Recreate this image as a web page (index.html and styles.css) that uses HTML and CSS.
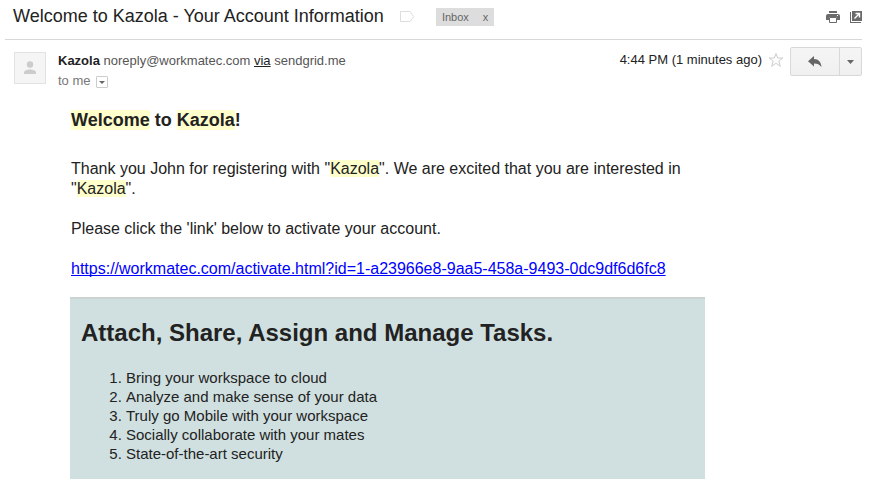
FILE: index.html
```
<!DOCTYPE html>
<html lang="en">
<head>
  <meta charset="UTF-8">
  <title>Welcome to Kazola - Your Account Information</title>
  <link rel="stylesheet" href="styles.css">
</head>
<body>
  <div id="mail">

    <!-- Subject bar -->
    <header class="subjectBar">
      <h1>Welcome to Kazola - Your Account Information</h1>
      <svg class="tagIcon" width="15" height="12" viewBox="0 0 15 12">
        <path d="M.5 .5H10L13.5 5.5V6L10 10.5H.5Z" fill="none" stroke="#ddd"/>
      </svg>
      <div class="label">
        <span>Inbox</span>
        <button type="button" aria-label="Remove label">x</button>
      </div>
      <div class="tools">
        <button type="button" aria-label="Print all">
          <svg width="14" height="12" viewBox="0 0 14 12">
            <path d="M3 0H11V2H3Z M2 3H12Q14 3 14 5V9H11V6H3V9H0V5Q0 3 2 3Z" fill="#6b6b6b"/>
            <path d="M3.5 6.5H10.5V11.5H3.5Z" fill="#fff" stroke="#6b6b6b"/>
            <path d="M11 4H12V5H11Z" fill="#fff"/>
          </svg>
        </button>
        <button type="button" aria-label="Open in new window">
          <svg width="12" height="12" viewBox="0 0 12 12">
            <path d="M2 0H12V10H2Z M0 1H1V11H11V12H0Z" fill="#6b6b6b"/>
            <path d="M4.5 7.5L9 3M5.5 2.5H9.5V6.5" fill="none" stroke="#fff" stroke-width="1.4"/>
          </svg>
        </button>
      </div>
    </header>

    <!-- Sender row -->
    <div class="sender">
      <div class="avatar">
        <svg width="14" height="14" viewBox="0 0 14 14" fill="#ccc">
          <circle cx="7" cy="3.5" r="3.2"/>
          <path d="M1 13V11.5C1 9.5 4 8.5 7 8.5S13 9.5 13 11.5V13Z"/>
        </svg>
      </div>
      <div class="from">
        <div><b>Kazola</b> noreply@workmatec.com <a href="#">via</a> sendgrid.me</div>
        <div class="to">to me
          <button type="button" aria-label="Show details">
            <svg width="6" height="3" viewBox="0 0 6 3"><path d="M0 0H6L3 3Z" fill="#666"/></svg>
          </button>
        </div>
      </div>
      <div class="date">4:44 PM (1 minutes ago)</div>
      <button type="button" class="star" aria-label="Star">
        <svg width="16" height="16" viewBox="0 0 16 16">
          <path d="M8 1.5L9.7 6H14.8L10.8 9.2L12.3 14.3L8 11.3L3.7 14.3L5.2 9.2L1.2 6H6.3Z" fill="none" stroke="#ccc"/>
        </svg>
      </button>
      <div class="actions">
        <button type="button" class="reply" aria-label="Reply">
          <svg width="14" height="12" viewBox="0 0 14 12">
            <path d="M6 0V3C10.5 3 13 6 13.5 11C11.5 8.5 9.5 7.5 6 7.5V10.5L0 5.2Z" fill="#666"/>
          </svg>
        </button>
        <button type="button" class="more" aria-label="More">
          <svg width="7" height="4" viewBox="0 0 7 4"><path d="M0 0H7L3.5 4Z" fill="#666"/></svg>
        </button>
      </div>
    </div>

    <!-- Message -->
    <div class="message">
      <h2><mark>Welcome</mark> to <mark>Kazola</mark>!</h2>
      <p>Thank you John for registering with "<mark>Kazola</mark>". We are excited that you are interested in "<mark>Kazola</mark>".</p>
      <p>Please click the 'link' below to activate your account.</p>
      <p><a href="https://workmatec.com/activate.html?id=1-a23966e8-9aa5-458a-9493-0dc9df6d6fc8">https://workmatec.com/activate.html?id=1-a23966e8-9aa5-458a-9493-0dc9df6d6fc8</a></p>
      <div class="promo">
        <h3>Attach, Share, Assign and Manage Tasks.</h3>
        <ol>
          <li>Bring your workspace to cloud</li>
          <li>Analyze and make sense of your data</li>
          <li>Truly go Mobile with your workspace</li>
          <li>Socially collaborate with your mates</li>
          <li>State-of-the-art security</li>
        </ol>
      </div>
    </div>

  </div>
</body>
</html>
```
FILE: styles.css
```
body {
  margin: 0;
  background: #fff;
  color: #222;
  font-family: "Liberation Sans", Arial, Helvetica, sans-serif;
}
button {
  margin: 0;
  padding: 0;
  border: 0;
  background: none;
  font: inherit;
  color: inherit;
  cursor: pointer;
}
svg {
  display: block;
}
#mail {
  padding: 0 13px 8px 5px;
}

.subjectBar {
  display: flex;
  align-items: center;
  padding: 6px 0 11px 8px;
  border-bottom: 1px solid #d8d8d8;
}
.subjectBar h1 {
  margin: 0;
  padding-bottom: 2px;
  font-size: 18px;
  line-height: 20px;
  font-weight: normal;
}
.tagIcon {
  margin-left: 16px;
}
.label {
  display: flex;
  margin-left: 21px;
  padding: 0 6px;
  gap: 14px;
  background: #ddd;
  color: #666;
  font-size: 11px;
  line-height: 18px;
}
.tools {
  display: flex;
  gap: 10px;
  margin-left: auto;
}

.sender {
  display: flex;
  align-items: flex-start;
  padding: 7px 0 0 9px;
  font-size: 13px;
  line-height: 20px;
}
.avatar {
  display: flex;
  align-items: center;
  justify-content: center;
  width: 30px;
  height: 30px;
  margin-top: 5px;
  border: 1px solid #e2e2e2;
  background: #f5f5f5;
}
.from {
  flex: 1;
  margin: 4px 0 0 12px;
  color: #555;
}
.from b {
  color: #222;
}
.from a {
  color: #222;
}
.to {
  display: flex;
  align-items: center;
  gap: 5px;
  color: #777;
}
.to button {
  display: flex;
  align-items: center;
  justify-content: center;
  width: 12px;
  height: 12px;
  margin-top: 2px;
  border: 1px solid #ccc;
  border-radius: 1px;
}
.date {
  margin-top: 3px;
}
.star {
  margin: 5px 6px 0;
}
.actions {
  display: flex;
  border: 1px solid #d8d8d8;
  border-radius: 2px;
  background: linear-gradient(#f5f5f5, #f0f0f0);
}
.actions button {
  display: flex;
  align-items: center;
  justify-content: center;
  height: 27px;
}
.reply {
  width: 48px;
}
.actions .more {
  width: 22px;
  border-left: 1px solid #d8d8d8;
}

.message {
  max-width: 635px;
  margin: 18px 0 0 65px;
  font-size: 16px;
  line-height: 20px;
}
.message h2,
.message p {
  margin: 0 0 20px 1px;
}
.message h2 {
  margin-bottom: 28px;
  font-size: 18px;
  line-height: 22px;
}
.message p:last-of-type {
  margin-bottom: 18px;
}
.message a {
  color: #00f;
  text-decoration-skip-ink: none;
}
mark {
  background: #ffc;
  color: inherit;
}
.promo {
  padding: 19px 11px 16px;
  border-top: 2px solid #ccd4d3;
  background: #d0e0e0;
}
.promo h3 {
  margin: 0 0 20px;
  font-size: 24px;
  line-height: 30px;
}
.promo ol {
  margin: 0;
  padding-left: 45px;
  font-size: 15px;
  line-height: 19px;
}
```
